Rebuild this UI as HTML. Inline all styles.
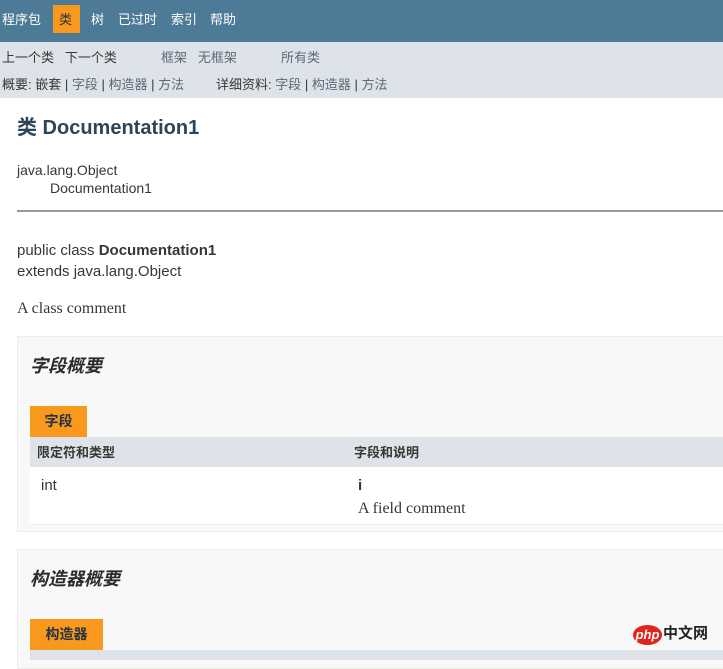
<!DOCTYPE html>
<html><head><meta charset="utf-8">
<style>
*{margin:0;padding:0;box-sizing:border-box}
body{width:723px;height:654px;overflow:hidden;background:#fff;font-family:"Liberation Sans","Noto Sans CJK SC",sans-serif;color:#353833;position:relative;font-size:14px}
.a{position:absolute;white-space:nowrap;line-height:1}
.top{position:absolute;left:0;top:0;width:723px;height:42px;background:#4d7a97}
.sub{position:absolute;left:0;top:42px;width:723px;height:56px;background:#dee3e9}
.nav{color:#fff;font-size:13px;top:13px}
.box{position:absolute;left:17px;width:720px;background:#f8f8f8;border:1px solid #ededed}
.h3{font-size:18px;font-weight:bold;font-style:italic;color:#2c2c2c}
.tab{position:absolute;background:#f8981d;color:#253441;font-size:14px;font-weight:bold;text-align:center;line-height:31px}
.serif{font-family:"Liberation Serif","Noto Serif CJK SC",serif}
.l{color:#5a6a78}
</style></head><body>
<div class="top"></div>
<div class="a" style="left:53px;top:5px;width:27px;height:28px;background:#f8981d"></div>
<div class="a nav" style="left:2px">程序包</div>
<div class="a nav" style="left:59px;color:#253441">类</div>
<div class="a nav" style="left:91px">树</div>
<div class="a nav" style="left:118px">已过时</div>
<div class="a nav" style="left:171px">索引</div>
<div class="a nav" style="left:210px">帮助</div>
<div class="sub"></div>
<div class="a" style="left:2px;top:51px;font-size:13px;color:#353833">上一个类&nbsp;&nbsp;&nbsp;下一个类</div>
<div class="a l" style="left:161px;top:51px;font-size:13px">框架&nbsp;&nbsp;&nbsp;无框架</div>
<div class="a l" style="left:281px;top:51px;font-size:13px">所有类</div>
<div class="a" style="left:2px;top:78px;font-size:13px;color:#353833">概要: 嵌套 | <span class="l">字段</span> | <span class="l">构造器</span> | <span class="l">方法</span></div>
<div class="a" style="left:216px;top:78px;font-size:13px;color:#353833">详细资料: <span class="l">字段</span> | <span class="l">构造器</span> | <span class="l">方法</span></div>
<div class="a" style="left:17px;top:118px;font-size:20px;font-weight:bold;color:#2c4557">类 Documentation1</div>
<div class="a" style="left:17px;top:163px;font-size:14px">java.lang.Object</div>
<div class="a" style="left:50px;top:181px;font-size:14px">Documentation1</div>
<div class="a" style="left:17px;top:210px;width:706px;height:2px;background:#9a9a9a"></div>
<div class="a" style="left:17px;top:243px;font-size:15px">public class <b>Documentation1</b></div>
<div class="a" style="left:17px;top:264px;font-size:15px">extends java.lang.Object</div>
<div class="a serif" style="left:17px;top:301px;font-size:16px">A class comment</div>

<div class="box" style="top:336px;height:196px"></div>
<div class="a h3" style="left:30px;top:357px">字段概要</div>
<div class="tab" style="left:30px;top:406px;width:57px;height:31px">字段</div>
<div class="a" style="left:30px;top:437px;width:693px;height:30px;background:#dee3e9"></div>
<div class="a" style="left:30px;top:467px;width:693px;height:58px;background:#fff;border-bottom:1px solid #eee"></div>
<div class="a" style="left:37px;top:446px;font-size:13px;font-weight:bold;color:#353833">限定符和类型</div>
<div class="a" style="left:354px;top:446px;font-size:13px;font-weight:bold;color:#353833">字段和说明</div>
<div class="a" style="left:41px;top:478px;font-size:15px">int</div>
<div class="a" style="left:358px;top:478px;font-size:15px;font-weight:bold;color:#353833">i</div>
<div class="a serif" style="left:358px;top:501px;font-size:16px">A field comment</div>

<div class="box" style="top:549px;height:120px"></div>
<div class="a h3" style="left:30px;top:570px">构造器概要</div>
<div class="tab" style="left:30px;top:619px;width:73px;height:31px">构造器</div>
<div class="a" style="left:30px;top:650px;width:693px;height:10px;background:#dee3e9"></div>
<div class="a" style="left:633px;top:625px;width:29px;height:20px;border-radius:50%;background:#e0251e;color:#fff;font-size:13px;font-style:italic;font-weight:bold;text-align:center;line-height:20px">php</div>
<div class="a" style="left:663px;top:626px;font-size:15px;font-weight:bold;color:#222">中文网</div>
</body></html>
